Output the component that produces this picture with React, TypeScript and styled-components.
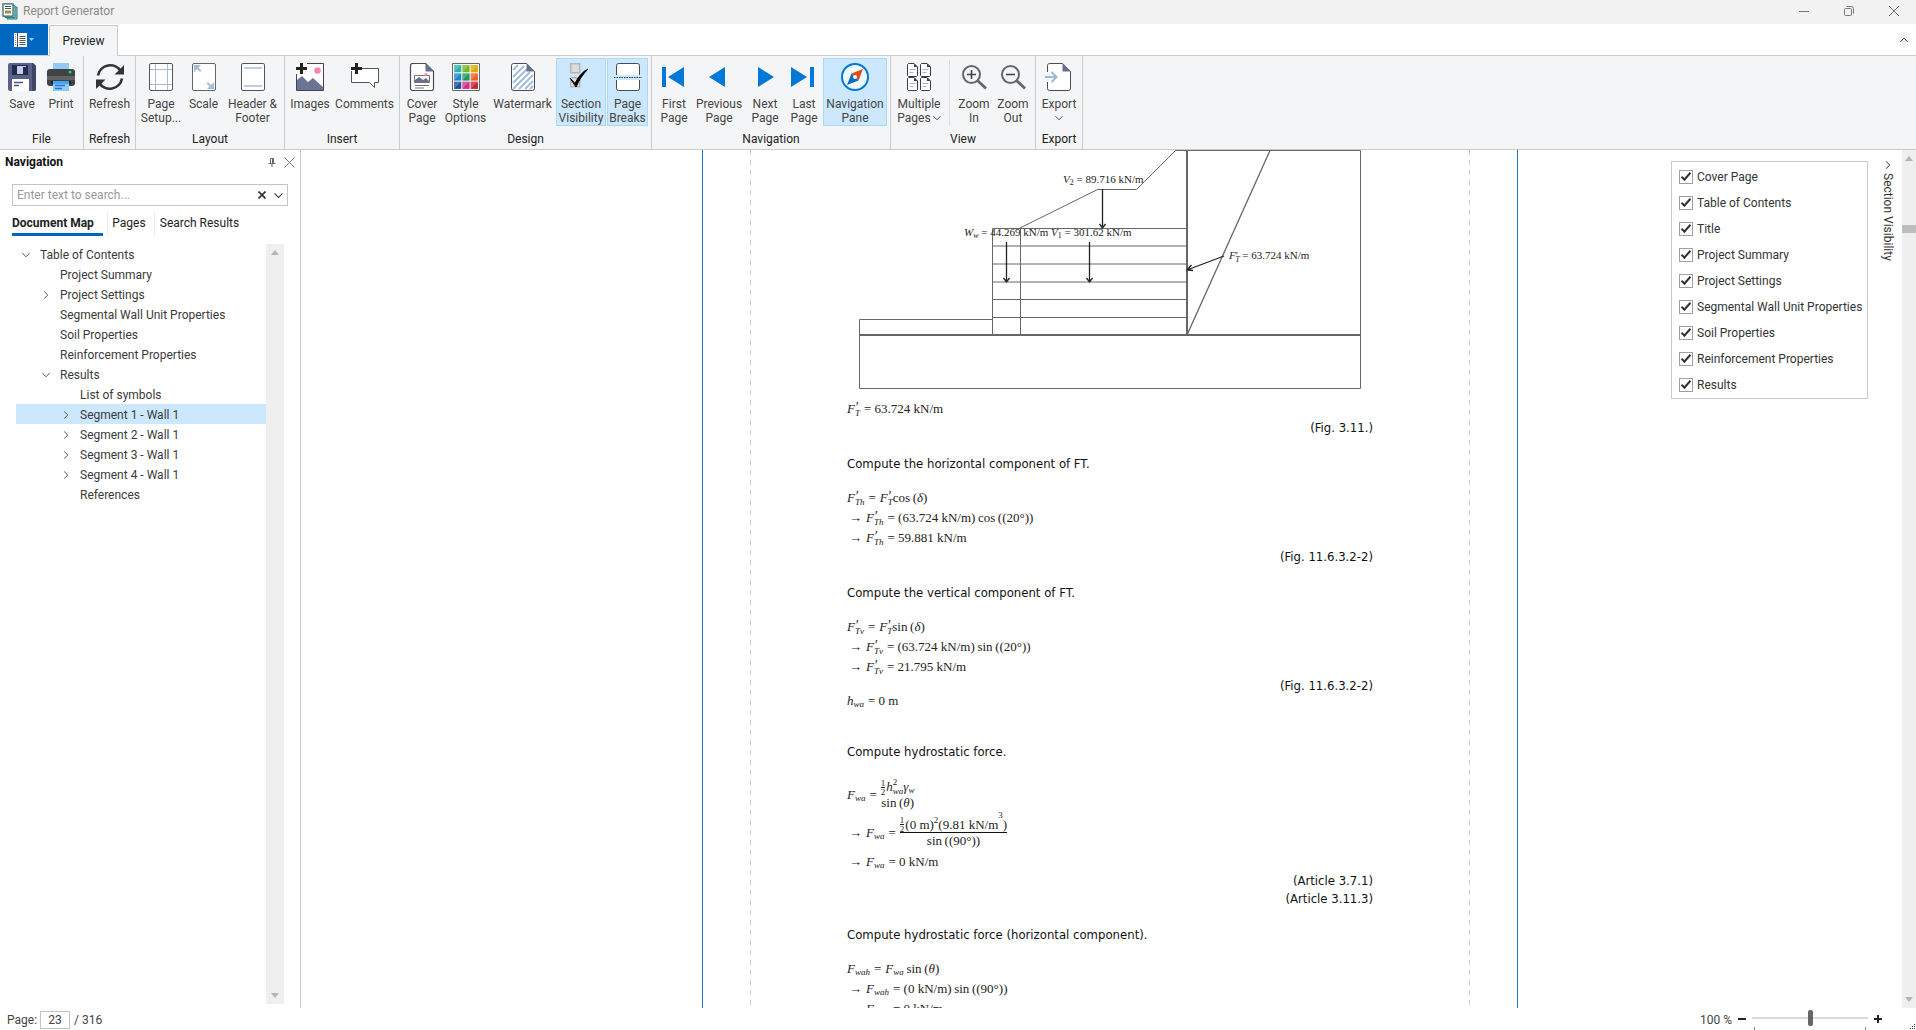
import React, { ReactNode } from 'react';
import styled, { createGlobalStyle, css } from 'styled-components';

const ui = 'Roboto, "Open Sans", "Noto Sans", sans-serif';
const edge = '#c9cccf';

const Global = createGlobalStyle`
  *, *::before, *::after { box-sizing: border-box; }
  html, body { margin: 0; padding: 0; background: #fff; }
  body { font: 12px/16px ${ui}; color: #333; overflow: hidden; }
  button, input { font: inherit; color: inherit; }
  button { border: 0; padding: 0; background: none; cursor: default; }
  svg { display: block; flex: none; }
`;

const Window = styled.div`
  display: flex;
  flex-direction: column;
  height: 100vh;
  background: #fff;
`;

/* ---------- title bar and tabs ---------- */

const TitleBar = styled.header`
  display: flex;
  align-items: center;
  gap: 5px;
  height: 24px;
  padding: 0 0 2px 2px;
  background: #f2f2f2;
  color: #8a8a8a;
`;

const WindowButtons = styled.div`
  display: flex;
  align-self: stretch;
  margin-left: auto;
`;

const WindowButton = styled.button`
  display: grid;
  place-items: center;
  width: 45px;
`;

const TabRow = styled.div`
  display: flex;
  align-items: stretch;
  height: 32px;
  border-bottom: 1px solid ${edge};
`;

const FileMenu = styled.button`
  display: flex;
  align-items: center;
  justify-content: center;
  gap: 2px;
  width: 48px;
  background: #0067c0;
`;

const RibbonTab = styled.button`
  width: 69px;
  margin: 1px 0 -1px 1px;
  border: 1px solid ${edge};
  border-bottom: 0;
  background: #f4f5f7;
  color: #222;
`;

const CollapseButton = styled.button`
  display: grid;
  place-items: center;
  align-self: center;
  width: 16px;
  height: 16px;
  margin: 0 4px 0 auto;
  border-radius: 50%;
  background: #f4f4f4;
`;

/* ---------- ribbon ---------- */

const Ribbon = styled.div`
  display: flex;
  height: 94px;
  border-bottom: 1px solid ${edge};
  background: #f4f5f7;
`;

const Group = styled.section`
  display: flex;
  flex-direction: column;
  padding: 2px 3px 0;
  border-right: 1px solid ${edge};
`;

const GroupTools = styled.div`
  display: flex;
  gap: 1px;
`;

const GroupTitle = styled.h2`
  margin: 5px 0 0;
  font: inherit;
  line-height: 16px;
  text-align: center;
  color: #222;
`;

const Tool = styled.button<{ $width: number; $active?: boolean }>`
  display: flex;
  flex-direction: column;
  align-items: center;
  gap: 6px;
  width: ${(p) => p.$width}px;
  height: 68px;
  padding-top: 4px;
  border: 1px solid transparent;
  line-height: 14px;
  white-space: nowrap;
  color: #444;
  ${(p) => p.$active && css`
    background: #cce8ff;
    border-color: #a9d8f8;
  `}
`;

const ToolLine = styled.span`
  display: flex;
  align-items: center;
  justify-content: center;
  gap: 2px;
  height: 14px;
`;

const Divider = styled.span`
  width: 1px;
  height: 66px;
  margin: 2px 4px 0;
  background: #dcdfe3;
`;

/* ---------- navigation pane ---------- */

const Body = styled.main`
  display: flex;
  flex: 1;
  min-height: 0;
`;

const NavPane = styled.aside`
  display: flex;
  flex-direction: column;
  flex: none;
  width: 301px;
  border-right: 1px solid ${edge};
`;

const PaneHeader = styled.div`
  display: flex;
  align-items: center;
  gap: 8px;
  height: 24px;
  padding: 0 5px;
`;

const PaneTitle = styled.h1`
  margin: 0 auto 0 0;
  font-size: 12px;
  font-weight: 700;
  color: #111;
`;

const SearchBox = styled.div`
  display: flex;
  align-items: center;
  gap: 8px;
  height: 22px;
  margin: 10px 12px 0;
  padding-right: 4px;
  border: 1px solid #c4c4c4;
`;

const SearchInput = styled.input`
  flex: 1;
  min-width: 0;
  padding: 0 4px;
  border: 0;
  outline: 0;
  &::placeholder { color: #999; opacity: 1; }
`;

const PaneTabs = styled.div`
  display: flex;
  gap: 4px;
  height: 24px;
  margin: 6px 12px 0;
`;

const PaneTab = styled.button<{ $current?: boolean; $width: number }>`
  width: ${(p) => p.$width}px;
  padding-bottom: 3px;
  text-align: center;
  white-space: nowrap;
  color: #222;
  ${(p) => p.$current
    ? css`
        font-weight: 700;
        border-bottom: 3px solid #0067c0;
        text-align: left;
        padding-bottom: 0;
      `
    : css`border-left: 1px solid #ececec;`}
`;

const TreeArea = styled.div`
  display: flex;
  flex: 1;
  min-height: 0;
  margin: 8px 16px 4px;
`;

const Tree = styled.ul`
  flex: 1;
  margin: 0;
  padding: 0;
  list-style: none;
`;

const TreeRow = styled.button<{ $level: number; $selected?: boolean }>`
  display: flex;
  align-items: center;
  gap: 8px;
  width: 100%;
  height: 20px;
  padding: 1px 0 0 ${(p) => 4 + p.$level * 20}px;
  white-space: nowrap;
  color: #3a3a3a;
  background: ${(p) => (p.$selected ? '#cce8ff' : 'transparent')};
`;

const ChevronSlot = styled.span`
  display: grid;
  place-items: center;
  width: 12px;
`;

const ScrollTrack = styled.div<{ $width: number }>`
  display: flex;
  flex-direction: column;
  align-items: center;
  flex: none;
  width: ${(p) => p.$width}px;
  padding: 6px 0;
  background: #efefef;
`;

const ScrollThumb = styled.span`
  width: 100%;
  height: 8px;
  margin-top: 64px;
  background: #bdbdbd;
`;

const ScrollEnd = styled.span`
  margin-top: auto;
`;

/* ---------- document ---------- */

const Viewer = styled.div`
  position: relative;
  display: flex;
  flex: 1;
  min-width: 0;
  overflow: hidden;
`;

const Canvas = styled.div`
  display: flex;
  flex: 1;
  justify-content: center;
  padding-left: 17px;
  overflow: hidden;
`;

const Sheet = styled.div`
  flex: none;
  width: 816px;
  padding: 0 47px;
  border: solid #1f78c0;
  border-width: 0 1px;
`;

const dashes = 'repeating-linear-gradient(#ccc 0 5px, transparent 5px 10px)';

const Margins = styled.article`
  height: 100%;
  padding: 0 97px;
  background: ${dashes} left / 1px 100% no-repeat, ${dashes} right / 1px 100% no-repeat;
  font: 13px/18px "DejaVu Sans Condensed", Tahoma, "DejaVu Sans", sans-serif;
  color: #111;
`;

const Figure = styled.svg`
  margin-left: 12px;
  overflow: visible;
  font-family: "Liberation Serif", serif;
  font-size: 11px;
`;

const Step = styled.h3<{ $gap?: number }>`
  margin: ${(p) => p.$gap ?? 18}px 0 15px;
  font: inherit;
`;

const Reference = styled.p`
  margin: 0;
  text-align: right;
`;

const Equation = styled.div<{ $height?: number; $indent?: boolean }>`
  display: flex;
  align-items: center;
  gap: 4px;
  height: ${(p) => p.$height ?? 20}px;
  padding-left: ${(p) => (p.$indent ? 2 : 0)}px;
  font: 13px/16px "Liberation Serif", serif;
  white-space: nowrap;
  color: #222;
`;

const Term = styled.span`
  display: inline-flex;
  align-items: center;
`;

const Stack = styled.span`
  display: inline-flex;
  flex-direction: column;
  font-size: 9px;
  line-height: 9px;
`;

const Prime = styled.i`
  height: 8px;
  font-size: 14px;
  line-height: 14px;
`;

const Sub = styled.span`
  padding-top: 7px;
  font-size: 9px;
  line-height: 9px;
`;

const Sup = styled.span<{ $high?: boolean }>`
  padding-bottom: ${(p) => (p.$high ? 18 : 8)}px;
  font-size: 9px;
  line-height: 9px;
`;

const Fraction = styled.span`
  display: inline-flex;
  flex-direction: column;
  align-items: center;
`;

const FractionPart = styled.span<{ $bar?: boolean }>`
  display: flex;
  align-items: center;
  height: 16px;
  border-bottom: ${(p) => (p.$bar ? '1px solid #111' : '0')};
`;

const Half = styled.span`
  display: inline-flex;
  flex-direction: column;
  margin-right: 1px;
  font-size: 9px;
  line-height: 8px;
  > :first-child { border-bottom: 1px solid #222; }
`;

/* ---------- section visibility ---------- */

const SectionPanel = styled.div`
  position: absolute;
  top: 11px;
  right: 48px;
  padding: 2px 6px 0 7px;
  width: 197px;
  height: 238px;
  border: 1px solid ${edge};
  background: #fff;
`;

const SectionOption = styled.label`
  display: flex;
  align-items: center;
  gap: 4px;
  height: 26px;
  white-space: nowrap;
  color: #333;
`;

const Check = styled.input`
  appearance: none;
  display: grid;
  place-items: center;
  flex: none;
  width: 14px;
  height: 14px;
  margin: 0;
  border: 1px solid #a0a0a0;
  background: #fff;
  &:checked::after {
    content: '';
    width: 10px;
    height: 5px;
    margin-top: -3px;
    border: solid #333;
    border-width: 0 0 2px 2px;
    transform: rotate(-48deg);
  }
`;

const SectionTab = styled.button`
  position: absolute;
  top: 11px;
  right: 20px;
  display: flex;
  align-items: center;
  gap: 4px;
  writing-mode: vertical-rl;
  color: #333;
`;

/* ---------- status bar ---------- */

const StatusBar = styled.footer`
  display: flex;
  align-items: center;
  height: 22px;
  padding: 2px 0 0 7px;
  color: #444;
`;

const PageField = styled.input`
  width: 30px;
  height: 18px;
  margin: 0 4px 0 3px;
  padding: 0;
  border: 1px solid #c4c4c4;
  text-align: center;
`;

const Zoom = styled.div`
  display: flex;
  align-items: center;
  gap: 5px;
  margin-left: auto;
`;

const ZoomButton = styled.button`
  display: grid;
  place-items: center;
  width: 10px;
  height: 16px;
  margin-bottom: 2px;
`;

const SliderWrap = styled.div`
  display: flex;
  flex-direction: column;
  width: 116px;
`;

const Slider = styled.input`
  appearance: none;
  width: 100%;
  height: 16px;
  margin: 0;
  background: linear-gradient(#d8d8d8, #d8d8d8) center / 100% 2px no-repeat;
  &::-webkit-slider-thumb {
    appearance: none;
    width: 5px;
    height: 16px;
    border-radius: 2px;
    background: #666;
  }
`;

const Ticks = styled.span`
  height: 3px;
  margin: 1px 2px 0;
  border: solid #888;
  border-width: 0 1px;
`;

const Grip = styled.span`
  align-self: flex-end;
  margin: 0 1px 1px 27px;
`;

/* ---------- icons ---------- */

const Chevron = ({ dir = 'down', size = 8, color = '#555' }: { dir?: 'down' | 'right' | 'up'; size?: number; color?: string }) => (
  <svg width={size} height={size} viewBox="0 0 8 8" fill="none" stroke={color} strokeWidth="1">
    <path d={dir === 'down' ? 'M.5 2.2 4 5.8 7.5 2.2' : dir === 'up' ? 'M.5 5.8 4 2.2 7.5 5.8' : 'M2.2.5 5.8 4 2.2 7.5'} />
  </svg>
);

const Triangle = ({ up }: { up?: boolean }) => (
  <svg width="8" height="5" viewBox="0 0 8 5"><path d={up ? 'M0 5 4 0 8 5Z' : 'M0 0 4 5 8 0Z'} fill="#b4b4b4" /></svg>
);

const Icon = ({ children }: { children: ReactNode }) => (
  <svg width="28" height="28" viewBox="0 0 28 28" fill="none">{children}</svg>
);

const sheetPath = 'M2.5 2.5a2 2 0 0 1 2-2h13l8 8v17a2 2 0 0 1-2 2h-19a2 2 0 0 1-2-2z';

const icons: Record<string, ReactNode> = {
  save: <Icon>
    <path d="M2 0h23l3 3v23a2 2 0 0 1-2 2H2a2 2 0 0 1-2-2V2a2 2 0 0 1 2-2z" fill="#58618a" />
    <path d="M24 0h1l3 3v23a2 2 0 0 1-2 2h-2z" fill="#3d4568" />
    <path d="M4 2h16v10H4z" fill="#242c4c" /><path d="M9 3h9v8H9z" fill="#c5cde8" /><path d="M15 4h3v7h-3z" fill="#242c4c" />
    <path d="M4 16h17v12H4z" fill="#fff" /><path d="M6 19.5h9M6 22.5h5" stroke="#4b547c" strokeWidth="1.3" />
  </Icon>,
  print: <Icon>
    <path d="M6 0h16v7H6z" fill="#90caf9" /><rect y="6" width="28" height="17" rx="3" fill="#424242" />
    <path d="M0 13h28v4H0z" fill="#626262" /><circle cx="23" cy="9" r="1.5" fill="#00e676" />
    <path d="M4 18h20v3H4z" fill="#242424" /><path d="M6 18h16v10H6z" fill="#90caf9" /><path d="M6 18h16v3H6z" fill="#42a5f5" />
    <path d="M8 22.5h10M8 25.5h7" stroke="#1976d2" strokeWidth="1.3" />
  </Icon>,
  refresh: <Icon>
    <path d="M2 12.5A12.4 12.4 0 0 1 25 8.5M26 15.5A12.4 12.4 0 0 1 3 19.5" stroke="#333" strokeWidth="2.600" />
    <path d="M28 2v9.5h-9.500zM0 26v-9.500h9.500z" fill="#333" />
  </Icon>,
  setup: <Icon>
    <rect x="2.500" y=".5" width="23" height="27" rx="1.5" fill="#fff" />
    <path d="M8.500 0v28M20.500 0v28M2 6.500h24M2 21.500h24" stroke="#a3bddb" />
    <rect x="2.500" y=".5" width="23" height="27" rx="1.500" stroke="#555" />
  </Icon>,
  scale: <Icon>
    <rect x="2.500" y=".5" width="23" height="27" rx="1.500" fill="#fff" stroke="#666" />
    <path d="M4 2h7l-2.500 2.500 3 3L10 9 7 6 4 9zM24 26h-7l2.500-2.500-3-3L18 19l3 3 3-3z" fill="#a3bddb" />
  </Icon>,
  header: <Icon>
    <rect x="2.500" y=".5" width="23" height="27" rx="1.500" fill="#fff" stroke="#555" />
    <path d="M5 5h18M5 23h18" stroke="#a3bddb" strokeWidth="1.6" />
  </Icon>,
  images: <Icon>
    <path d="M.5.5h27v27H.5z" fill="#fff" stroke="#444" /><circle cx="21.500" cy="7.500" r="3.300" fill="#f58ca5" />
    <path d="M1 17l5-4 6 6 5-4 10 9v3H1z" fill="#6a7593" /><path d="M0 0h11v11H0z" fill="#f4f5f7" />
    <path d="M5.500 0v11M0 5.500h11" stroke="#222" strokeWidth="3" />
  </Icon>,
  comments: <Icon>
    <path d="M11 5.500h16.500v14h-4v5l-5-5H.5V8" fill="#fff" stroke="#555" /><path d="M5.500 0v11M0 5.500h11" stroke="#222" strokeWidth="3" />
  </Icon>,
  cover: <Icon>
    <path d={sheetPath} fill="#fff" stroke="#4a4a55" strokeWidth="1.200" /><path d="M17.500 0v8.500H26z" fill="#666f8e" />
    <path d="M6.500 12.500h15v7h-15z" fill="#fff" stroke="#777" /><path d="M7 19v-2l4-3 4 3 3-2 3 3v1z" fill="#666f8e" />
    <circle cx="18" cy="11.500" r="1.500" fill="#f58ca5" /><path d="M7 22.500h14M7 25h9" stroke="#666f8e" />
  </Icon>,
  style: <Icon>
    <path d="M.5.5h27v27H.5z" fill="#fff" stroke="#666" />
    {['#28b5a8', '#77b52a', '#e0a800', '#1f86c8', '#1e9a55', '#e8602a', '#1d4f9c', '#d02a8c', '#c8242e'].map((c, i) => {
      const x = 2 + (i % 3) * 8.300, y = 2 + Math.floor(i / 3) * 8.300;
      return <g key={c}><rect x={x} y={y} width="7.300" height="7.300" fill={c} /><path d={`M${x} ${y + 7.300}V${y}h7.300z`} fill="#fff" opacity=".22" /></g>;
    })}
  </Icon>,
  watermark: <Icon>
    <path d={sheetPath} fill="#fff" stroke="#4a4a55" />
    <path d="M4 7l5-5M4 14 15 3M4 20l14-14M4 26 21 9M10 26 24 12M16 26l8-8M21 26l3-3" stroke="#a3bddb" strokeWidth="2" />
    <path d="M17.500 0v8.500H26z" fill="#666f8e" />
  </Icon>,
  visibility: <Icon>
    <path d="M3.700.7h9v9h-9zM3.700 14.700h9v9h-9z" fill="#ddd" stroke="#b5b5b5" strokeWidth="1.500" />
    <path d="M3 15l5 5.500C11 14 15 9 21 6 16 11 12 17 9 24z" fill="#000" stroke="#000" />
  </Icon>,
  breaks: <Icon>
    <path d="M2.500 12V2.500a2 2 0 0 1 2-2h19a2 2 0 0 1 2 2V12zM2.500 17v8.500a2 2 0 0 0 2 2h19a2 2 0 0 0 2-2V17z" fill="#fff" />
    <path d="M2.500 12V2.500a2 2 0 0 1 2-2h19a2 2 0 0 1 2 2V12M2.500 17v8.500a2 2 0 0 0 2 2h19a2 2 0 0 0 2-2V17" stroke="#4a4a55" />
    <path d="M0 14.500h28" stroke="#333" strokeDasharray="1.500 1" />
  </Icon>,
  first: <Icon><path d="M2 4h4v20H2zM24 4v20L8 14z" fill="#0078d7" /></Icon>,
  prev: <Icon><path d="M20 4v20L4 14z" fill="#0078d7" /></Icon>,
  next: <Icon><path d="M7 4v20l16-10z" fill="#0078d7" /></Icon>,
  last: <Icon><path d="M20 4h4v20h-4zM1 4v20l16-10z" fill="#0078d7" /></Icon>,
  compass: <Icon>
    <circle cx="14" cy="14" r="13" fill="#eff8ff" stroke="#0078d7" strokeWidth="2" />
    <path d="M22 6 10.500 10.500l7 7z" fill="#e04a17" /><path d="M6 22 10.500 10.500l7 7z" fill="#0f6cbd" /><circle cx="14" cy="14" r="2" fill="#eff8ff" />
  </Icon>,
  multiple: <Icon>
    {[[2.500, 0.500], [15.500, 0.500], [2.500, 14.500], [15.500, 14.500]].map(([x, y]) => (
      <g key={`${x}-${y}`}>
        <path d={`M${x} ${y + 1}l1-1h5.500l3.500 3.500V${y + 12}l-1 1h-8l-1-1z`} fill="#fff" stroke="#3c3c46" />
        <path d={`M${x + 6.500} ${y}v3.500h3.500z`} fill="#3c3c46" />
        <path d={`M${x + 2} ${y + 6}h6M${x + 2} ${y + 9}h4`} stroke="#9fb4d0" strokeWidth="1.200" />
      </g>
    ))}
  </Icon>,
  zoomIn: <Icon>
    <circle cx="11.500" cy="11.500" r="8.500" stroke="#666" strokeWidth="2" /><path d="m17.500 17.500 8.500 8" stroke="#666" strokeWidth="2.800" />
    <path d="M11.500 7v9M7 11.500h9" stroke="#444" strokeWidth="1.600" />
  </Icon>,
  zoomOut: <Icon>
    <circle cx="11.500" cy="11.500" r="8.500" stroke="#666" strokeWidth="2" /><path d="m17.500 17.500 8.500 8" stroke="#666" strokeWidth="2.800" />
    <path d="M7 11.500h9" stroke="#444" strokeWidth="1.600" />
  </Icon>,
  export: <Icon>
    <path d={sheetPath} fill="#fff" stroke="#4a4a55" /><path d="M17.500 0v8.500H26z" fill="#666f8e" />
    <path d="M0 9h5v10H0z" fill="#f4f5f7" /><path d="M0 14h11M6.500 9l5 5-5 5" stroke="#9bb8d6" strokeWidth="2" />
  </Icon>,
};

/* ---------- data ---------- */

type ToolDef = { icon: string; lines: string[]; width: number; active?: boolean; menu?: boolean; dividerAfter?: boolean };

const groups: { title: string; tools: ToolDef[] }[] = [
  { title: 'File', tools: [{ icon: 'save', lines: ['Save'], width: 38 }, { icon: 'print', lines: ['Print'], width: 38 }] },
  { title: 'Refresh', tools: [{ icon: 'refresh', lines: ['Refresh'], width: 45 }] },
  {
    title: 'Layout', tools: [
      { icon: 'setup', lines: ['Page', 'Setup...'], width: 44 },
      { icon: 'scale', lines: ['Scale'], width: 39 },
      { icon: 'header', lines: ['Header &', 'Footer'], width: 57 },
    ],
  },
  { title: 'Insert', tools: [{ icon: 'images', lines: ['Images'], width: 44 }, { icon: 'comments', lines: ['Comments'], width: 63 }] },
  {
    title: 'Design', tools: [
      { icon: 'cover', lines: ['Cover', 'Page'], width: 38 },
      { icon: 'style', lines: ['Style', 'Options'], width: 47 },
      { icon: 'watermark', lines: ['Watermark'], width: 65 },
      { icon: 'visibility', lines: ['Section', 'Visibility'], width: 50, active: true },
      { icon: 'breaks', lines: ['Page', 'Breaks'], width: 41, active: true },
    ],
  },
  {
    title: 'Navigation', tools: [
      { icon: 'first', lines: ['First', 'Page'], width: 38 },
      { icon: 'prev', lines: ['Previous', 'Page'], width: 50 },
      { icon: 'next', lines: ['Next', 'Page'], width: 40 },
      { icon: 'last', lines: ['Last', 'Page'], width: 36 },
      { icon: 'compass', lines: ['Navigation', 'Pane'], width: 64, active: true },
    ],
  },
  {
    title: 'View', tools: [
      { icon: 'multiple', lines: ['Multiple', 'Pages'], width: 50, menu: true, dividerAfter: true },
      { icon: 'zoomIn', lines: ['Zoom', 'In'], width: 38 },
      { icon: 'zoomOut', lines: ['Zoom', 'Out'], width: 38 },
    ],
  },
  { title: 'Export', tools: [{ icon: 'export', lines: ['Export', ''], width: 40, menu: true }] },
];

const tree: { label: string; level: number; state?: 'open' | 'closed'; selected?: boolean }[] = [
  { label: 'Table of Contents', level: 0, state: 'open' },
  { label: 'Project Summary', level: 1 },
  { label: 'Project Settings', level: 1, state: 'closed' },
  { label: 'Segmental Wall Unit Properties', level: 1 },
  { label: 'Soil Properties', level: 1 },
  { label: 'Reinforcement Properties', level: 1 },
  { label: 'Results', level: 1, state: 'open' },
  { label: 'List of symbols', level: 2 },
  { label: 'Segment 1 - Wall 1', level: 2, state: 'closed', selected: true },
  { label: 'Segment 2 - Wall 1', level: 2, state: 'closed' },
  { label: 'Segment 3 - Wall 1', level: 2, state: 'closed' },
  { label: 'Segment 4 - Wall 1', level: 2, state: 'closed' },
  { label: 'References', level: 2 },
];

const sections = [
  'Cover Page', 'Table of Contents', 'Title', 'Project Summary', 'Project Settings',
  'Segmental Wall Unit Properties', 'Soil Properties', 'Reinforcement Properties', 'Results',
];

/* ---------- formula parts ---------- */

const Force = ({ sub, prime }: { sub: string; prime?: boolean }) => (
  <Term>
    <i>F</i>
    {prime ? <Stack><Prime>′</Prime><i>{sub}</i></Stack> : <Sub><i>{sub}</i></Sub>}
  </Term>
);

const OneHalf = () => <Half><span>1</span><span>2</span></Half>;

const Result = ({ children, height }: { children: ReactNode; height?: number }) => (
  <Equation $indent $height={height}><span>→</span>{children}</Equation>
);

/* ---------- wall drawing ---------- */

const Arrow = ({ x, y1, y2 }: { x: number; y1: number; y2: number }) => (
  <path d={`M${x} ${y1}V${y2}M${x - 3} ${y2 - 4}L${x} ${y2}l3-4`} stroke="#222" strokeWidth="1.3" />
);

const WallFigure = () => (
  <Figure width="502" height="249" viewBox="0 0 502 249" fill="none">
    <g stroke="#666">
      <path d="M501.500.5V238.500H.5V169.500H133.500M316.500.5H501.500" />
      <path d="M0 185H502" strokeWidth="2" />
      <path d="M133.500 185V78.500H328M161.500 78V185M133.500 96H328M133.500 114H328M133.500 132H328M133.500 149.500H328M133.500 167.500H328" />
      <path d="M328 0V185" strokeWidth="2" />
      <path d="M161 78 238.500 39.500H277.500L316.500.5" />
      <path d="M328 185 411 .5" strokeWidth="1.300" />
    </g>
    <Arrow x={243.5} y1={39} y2={78} />
    <Arrow x={147.5} y1={92} y2={132} />
    <Arrow x={230.5} y1={92} y2={132} />
    <path d="M365 106 328 120M332.500 115 328 120l6 .5" stroke="#222" strokeWidth="1.300" />
    <g fill="#222">
      <text x="204" y="33"><tspan fontStyle="italic">V</tspan><tspan fontSize="8" dy="2">2</tspan><tspan dy="-2"> = 89.716 kN/m</tspan></text>
      <text x="105" y="86"><tspan fontStyle="italic">W</tspan><tspan fontSize="8" fontStyle="italic" dy="2">w</tspan><tspan dy="-2"> = 44.269 kN/m</tspan></text>
      <text x="192" y="86"><tspan fontStyle="italic">V</tspan><tspan fontSize="8" dy="2">1</tspan><tspan dy="-2"> = 301.62 kN/m</tspan></text>
      <text x="370" y="109"><tspan fontStyle="italic">F</tspan><tspan>′</tspan><tspan fontSize="8" fontStyle="italic" dx="-3" dy="3">T</tspan><tspan dy="-3"> = 63.724 kN/m</tspan></text>
    </g>
  </Figure>
);

export default function App() {
  return (
    <Window>
      <Global />
      <TitleBar>
        <svg width="16" height="17" viewBox="0 0 16 17" fill="none">
          <path d="M5 4h10v12H5z" fill="#7cc3c3" stroke="#2f7f80" /><path d="M3 2.500h10v12H3z" fill="#b8e0df" stroke="#2f7f80" />
          <path d="M1 .8h10v12.400H1z" fill="#fff" stroke="#2d6266" strokeWidth="1.200" /><path d="M3 3.500h6M3 5.500h6" stroke="#2d6266" />
          <path d="M3 7.500h6v3H3z" fill="#a58f3a" />
        </svg>
        Report Generator
        <WindowButtons>
          <WindowButton aria-label="Minimize"><svg width="10" height="10"><path d="M0 5.500h10" stroke="#777" /></svg></WindowButton>
          <WindowButton aria-label="Restore">
            <svg width="10" height="10" fill="none" stroke="#777"><rect x=".5" y="2.500" width="7" height="7" rx="1" /><path d="M2.500.5h5a2 2 0 0 1 2 2v5" /></svg>
          </WindowButton>
          <WindowButton aria-label="Close"><svg width="10" height="10"><path d="m0 0 10 10M10 0 0 10" stroke="#777" /></svg></WindowButton>
        </WindowButtons>
      </TitleBar>

      <TabRow>
        <FileMenu aria-label="File menu">
          <svg width="13" height="14" viewBox="0 0 13 14"><path d="M0 0h13v14H0z" fill="#fff" /><path d="M3.500 0v14M5.500 3.500h6M5.500 5.500h6M5.500 7.500h6M5.500 9.500h6M5.500 11.500h6" stroke="#555" /><path d="M1.500 1v12" stroke="#888" strokeDasharray="1 1" /></svg>
          <svg width="5" height="3"><path d="M0 0h5L2.500 3z" fill="#9fd0f5" /></svg>
        </FileMenu>
        <RibbonTab>Preview</RibbonTab>
        <CollapseButton aria-label="Collapse ribbon"><Chevron dir="up" color="#333" /></CollapseButton>
      </TabRow>

      <Ribbon>
        {groups.map((g) => (
          <Group key={g.title}>
            <GroupTools>
              {g.tools.map((t) => (
                <React.Fragment key={t.icon}>
                  <Tool $width={t.width} $active={t.active}>
                    {icons[t.icon]}
                    <span>
                      {t.lines.map((line, i) => (
                        <ToolLine key={i}>
                          {line}
                          {t.menu && i === t.lines.length - 1 && <Chevron />}
                        </ToolLine>
                      ))}
                    </span>
                  </Tool>
                  {t.dividerAfter && <Divider />}
                </React.Fragment>
              ))}
            </GroupTools>
            <GroupTitle>{g.title}</GroupTitle>
          </Group>
        ))}
      </Ribbon>

      <Body>
        <NavPane>
          <PaneHeader>
            <PaneTitle>Navigation</PaneTitle>
            <button aria-label="Pin"><svg width="8" height="9" fill="none" stroke="#666"><path d="M2.500 5V.5h3V5M4.500 1v4M.5 5.500h7M4 6v3" /></svg></button>
            <button aria-label="Close pane"><svg width="11" height="11"><path d="m.5.5 10 10M10.500.5l-10 10" stroke="#777" /></svg></button>
          </PaneHeader>
          <SearchBox>
            <SearchInput aria-label="Search" placeholder="Enter text to search..." />
            <button aria-label="Clear"><svg width="8" height="8"><path d="m.5.5 7 7M7.500.5l-7 7" stroke="#333" strokeWidth="1.700" /></svg></button>
            <button aria-label="Search options"><Chevron size={9} color="#333" /></button>
          </SearchBox>
          <PaneTabs>
            <PaneTab $current $width={91}>Document Map</PaneTab>
            <PaneTab $width={43}>Pages</PaneTab>
            <PaneTab $width={90}>Search Results</PaneTab>
          </PaneTabs>
          <TreeArea>
            <Tree>
              {tree.map((n) => (
                <li key={n.label}>
                  <TreeRow $level={n.level} $selected={n.selected}>
                    <ChevronSlot>{n.state && <Chevron dir={n.state === 'open' ? 'down' : 'right'} />}</ChevronSlot>
                    {n.label}
                  </TreeRow>
                </li>
              ))}
            </Tree>
            <ScrollTrack $width={18}>
              <Triangle up />
              <ScrollEnd><Triangle /></ScrollEnd>
            </ScrollTrack>
          </TreeArea>
        </NavPane>

        <Viewer>
          <Canvas>
            <Sheet>
              <Margins>
                <WallFigure />
                <Equation><Force sub="T" prime /> = 63.724 kN/m</Equation>
                <Reference>(Fig. 3.11.)</Reference>

                <Step>Compute the horizontal component of FT.</Step>
                <Equation><Force sub="Th" prime /> = <Term><Force sub="T" prime />cos&thinsp;(<i>δ</i>)</Term></Equation>
                <Result><Force sub="Th" prime /> = (63.724 kN/m)&thinsp;cos&thinsp;((20°))</Result>
                <Result><Force sub="Th" prime /> = 59.881 kN/m</Result>
                <Reference>(Fig. 11.6.3.2-2)</Reference>

                <Step>Compute the vertical component of FT.</Step>
                <Equation><Force sub="Tv" prime /> = <Term><Force sub="T" prime />sin&thinsp;(<i>δ</i>)</Term></Equation>
                <Result><Force sub="Tv" prime /> = (63.724 kN/m)&thinsp;sin&thinsp;((20°))</Result>
                <Result><Force sub="Tv" prime /> = 21.795 kN/m</Result>
                <Reference>(Fig. 11.6.3.2-2)</Reference>
                <Equation $height={12}><Term><i>h</i><Sub><i>wa</i></Sub></Term> = 0 m</Equation>

                <Step $gap={36}>Compute hydrostatic force.</Step>
                <Equation $height={38}>
                  <Force sub="wa" /> =
                  <Fraction>
                    <FractionPart><OneHalf /><i>h</i><Stack><span>2</span><i>wa</i></Stack><i>γ</i><Sub><i>w</i></Sub></FractionPart>
                    <FractionPart>sin&thinsp;(<i>θ</i>)</FractionPart>
                  </Fraction>
                </Equation>
                <Result height={38}>
                  <Force sub="wa" /> =
                  <Fraction>
                    <FractionPart $bar><OneHalf />(0 m)<Sup>2</Sup>(9.81 kN/m<Sup $high>3</Sup>)</FractionPart>
                    <FractionPart>sin&thinsp;((90°))</FractionPart>
                  </Fraction>
                </Result>
                <Result><Force sub="wa" /> = 0 kN/m</Result>
                <Reference>(Article 3.7.1)<br />(Article 3.11.3)</Reference>

                <Step>Compute hydrostatic force (horizontal component).</Step>
                <Equation><Force sub="wah" /> = <Term><Force sub="wa" />&thinsp;sin&thinsp;(<i>θ</i>)</Term></Equation>
                <Result><Force sub="wah" /> = (0 kN/m)&thinsp;sin&thinsp;((90°))</Result>
                <Result><Force sub="wah" /> = 0 kN/m</Result>
              </Margins>
            </Sheet>
          </Canvas>
          <SectionPanel>
            {sections.map((s) => (
              <SectionOption key={s}><Check type="checkbox" defaultChecked />{s}</SectionOption>
            ))}
          </SectionPanel>
          <SectionTab><Chevron dir="right" color="#333" />Section Visibility</SectionTab>
          <ScrollTrack $width={14}>
            <Triangle up />
            <ScrollThumb />
            <ScrollEnd><Triangle /></ScrollEnd>
          </ScrollTrack>
        </Viewer>
      </Body>

      <StatusBar>
        <label htmlFor="page">Page:</label>
        <PageField id="page" defaultValue="23" />
        / 316
        <Zoom>
          <label htmlFor="zoom">100 %</label>
          <ZoomButton aria-label="Zoom out"><svg width="8" height="8"><path d="M0 4h8" stroke="#222" strokeWidth="2" /></svg></ZoomButton>
          <SliderWrap>
            <Slider id="zoom" type="range" min="0" max="100" defaultValue="50" />
            <Ticks />
          </SliderWrap>
          <ZoomButton aria-label="Zoom in"><svg width="8" height="8"><path d="M0 4h8M4 0v8" stroke="#222" strokeWidth="2" /></svg></ZoomButton>
        </Zoom>
        <Grip><svg width="5" height="5" fill="#444"><path d="M4 0h1v1H4zM2 2h1v1H2zM4 2h1v1H4zM0 4h1v1H0zM2 4h1v1H2zM4 4h1v1H4z" /></svg></Grip>
      </StatusBar>
    </Window>
  );
}
